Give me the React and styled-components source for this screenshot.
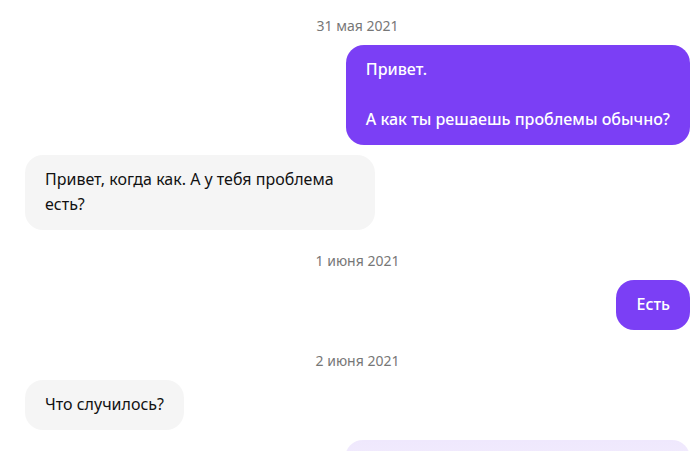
import React from "react";
import styled, { createGlobalStyle } from "styled-components";

const GlobalStyle = createGlobalStyle`
  html, body {
    margin: 0;
    padding: 0;
    background: #ffffff;
    overflow: hidden;
  }
  body {
    font-family: "Noto Sans", "DejaVu Sans", sans-serif;
  }
`;

const Chat = styled.div`
  width: 697px;
  height: 451px;
  box-sizing: border-box;
  padding: 5px 7px 0 25px;
  display: flex;
  flex-direction: column;
  gap: 10px;
  overflow: hidden;
`;

const DateLabel = styled.div`
  padding-top: 12px;
  text-align: center;
  font-size: 14px;
  line-height: 18px;
  color: #777777;
`;

const Row = styled.div`
  display: flex;
  justify-content: ${(props) => (props.$mine ? "flex-end" : "flex-start")};
`;

const Bubble = styled.div`
  max-width: 350px;
  box-sizing: border-box;
  padding: 12px 20px 13px;
  border-radius: 18px;
  font-size: 16px;
  line-height: 25px;
  white-space: pre-line;
  background: ${(props) => (props.$mine ? "#7b3ff5" : "#f5f5f5")};
  color: ${(props) => (props.$mine ? "#ffffff" : "#111111")};
  font-weight: ${(props) => (props.$mine ? 500 : 400)};
`;

const FadingBubble = styled(Bubble)`
  width: 345px;
  height: 60px;
  background: linear-gradient(to bottom, #efe8fd, #f6f2fe);
`;

const messages = [
  { type: "date", text: "31 мая 2021" },
  { mine: true, text: "Привет.\n\nА как ты решаешь проблемы обычно?" },
  { mine: false, text: "Привет, когда как. А у тебя проблема есть?" },
  { type: "date", text: "1 июня 2021" },
  { mine: true, text: "Есть" },
  { type: "date", text: "2 июня 2021" },
  { mine: false, text: "Что случилось?" },
];

export default function App() {
  return (
    <>
      <GlobalStyle />
      <Chat>
        {messages.map((m, i) =>
          m.type === "date" ? (
            <DateLabel key={i}>{m.text}</DateLabel>
          ) : (
            <Row key={i} $mine={m.mine}>
              <Bubble $mine={m.mine}>{m.text}</Bubble>
            </Row>
          )
        )}
        <Row $mine>
          <FadingBubble $mine />
        </Row>
      </Chat>
    </>
  );
}
